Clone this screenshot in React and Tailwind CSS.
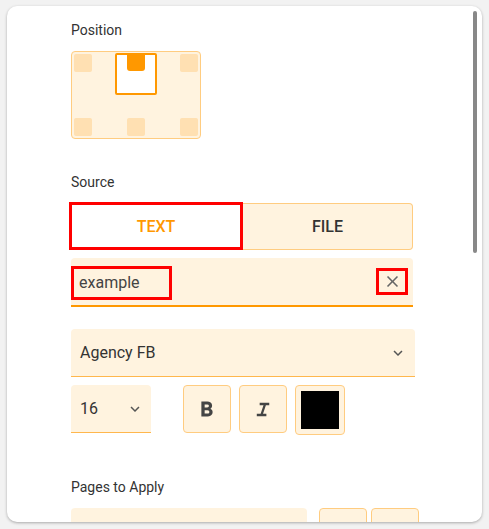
import {useState} from "react";

function Chevron({className}) {
    return (
        <svg viewBox="0 0 24 24" width="18" height="18" className={className}>
            <path fill="#555" d="M16.59 8.59 12 13.17 7.41 8.59 6 10l6 6 6-6z"/>
        </svg>
    )
}

export default function App() {
    const [source, setSource] = useState("text")

    return (
        <div className="min-h-screen bg-[#f2f2f2] pt-[6px] pl-[7px] font-['Roboto',sans-serif] text-[#333]">
            <div className="relative w-[475px] h-[516px] bg-white rounded-[10px] shadow-[0_1px_3px_rgba(0,0,0,0.3)] overflow-hidden">
                <div className="pl-[64px] pt-[14px] w-[420px]">
                    <p className="text-[14px] leading-[20px]">Position</p>

                    {/* position picker */}
                    <div className="relative mt-[11px] w-[130px] h-[88px] bg-[#fff3df] border border-[#ffcc80] rounded-[4px]">
                        <div className="absolute left-[2px] top-[2px] w-[18px] h-[18px] rounded-[2px] bg-[#ffe0b2]"></div>
                        <div className="absolute left-[108px] top-[2px] w-[18px] h-[18px] rounded-[2px] bg-[#ffe0b2]"></div>
                        <div className="absolute left-[2px] top-[66px] w-[18px] h-[18px] rounded-[2px] bg-[#ffe0b2]"></div>
                        <div className="absolute left-[55px] top-[66px] w-[18px] h-[18px] rounded-[2px] bg-[#ffe0b2]"></div>
                        <div className="absolute left-[108px] top-[66px] w-[18px] h-[18px] rounded-[2px] bg-[#ffe0b2]"></div>
                        <div className="absolute left-[43px] top-[1px] w-[42px] h-[42px] bg-white border-2 border-[#ff9800] rounded-[2px]"></div>
                        <div className="absolute left-[55px] top-[1px] w-[18px] h-[18px] rounded-b-[3px] bg-[#ff9800]"></div>
                    </div>

                    <p className="mt-[33px] text-[14px] leading-[20px]">Source</p>

                    {/* source toggle */}
                    <div className="mt-[10px] flex h-[48px] w-[344px] -ml-[2px]">
                        <button
                            onClick={() => setSource("text")}
                            className="w-[174px] h-full pt-[2px] bg-white border-[3px] border-[#ff0000] text-[16px] font-medium text-[#ff9800]"
                        >
                            TEXT
                        </button>
                        <button
                            onClick={() => setSource("file")}
                            className="flex-1 h-[47px] mt-[1px] bg-[#fff3df] border border-l-0 border-[#ffcc80] rounded-r-[4px] text-[16px] font-medium text-[#333]"
                        >
                            FILE
                        </button>
                    </div>

                    {/* text input */}
                    <div className="mt-[8px] w-[342px] h-[49px] bg-[#fff3df] border-b-2 border-[#ff9800] rounded-t-[4px] flex items-start justify-between">
                        <div className="mt-[8px] w-[101px] h-[34px] border-[3px] border-[#ff0000] flex items-center pl-[5px] text-[16px] text-[#444]">
                            {source === "text" ? "example" : "example"}
                        </div>
                        <div className="mt-[10px] mr-[5px] w-[32px] h-[27px] border-[3px] border-[#ff0000] flex items-center justify-center">
                            <svg viewBox="0 0 24 24" width="19" height="19">
                                <path fill="#666" d="M19 6.41 17.59 5 12 10.59 6.41 5 5 6.41 10.59 12 5 17.59 6.41 19 12 13.41 17.59 19 19 17.59 13.41 12z"/>
                            </svg>
                        </div>
                    </div>

                    {/* font select */}
                    <div className="mt-[22px] w-[344px] h-[48px] bg-[#fff3df] border-b border-[#ffb74d] rounded-t-[4px] flex items-center justify-between pl-[9px] pr-[8px]">
                        <span className="text-[16px] text-[#333]">Agency FB</span>
                        <Chevron/>
                    </div>

                    <div className="mt-[8px] flex items-start">
                        <div className="w-[80px] h-[48px] bg-[#fff3df] border-b border-[#ffb74d] rounded-t-[4px] flex items-center justify-between pl-[9px] pr-[7px]">
                            <span className="text-[16px] text-[#333]">16</span>
                            <Chevron/>
                        </div>
                        <button className="ml-[32px] w-[48px] h-[48px] bg-[#fff3df] border border-[#ffcc80] rounded-[4px] flex items-center justify-center">
                            <svg viewBox="0 -960 960 960" width="26" height="26">
                                <path fill="#444" d="M272-200v-560h221q65 0 120 40t55 111q0 51-23 78.5T602-491q25 11 55.5 41t30.5 90q0 89-65 124.5T501-200H272Zm121-112h104q48 0 58.5-24.5T566-372q0-11-10.5-35.5T494-432H393v120Zm0-228h93q33 0 48-17t15-38q0-24-17-39t-44-15h-95v109Z"/>
                            </svg>
                        </button>
                        <button className="ml-[8px] w-[48px] h-[48px] bg-[#fff3df] border border-[#ffcc80] rounded-[4px] flex items-center justify-center">
                            <svg viewBox="0 -960 960 960" width="23" height="23">
                                <path fill="#444" d="M200-200v-100h160l120-360H320v-100h400v100H580L460-300h140v100H200Z"/>
                            </svg>
                        </button>
                        <button className="ml-[8px] w-[50px] h-[50px] bg-[#fff3df] border-[1.5px] border-[#ffcc80] rounded-[4px] flex items-center justify-center">
                            <div className="w-[38px] h-[38px] bg-black"></div>
                        </button>
                    </div>

                    <p className="mt-[42px] text-[14px] leading-[20px]">Pages to Apply</p>

                    <div className="mt-[11px] flex items-start">
                        <div className="w-[236px] h-[48px] bg-[#fff3df] rounded-t-[4px]"></div>
                        <button className="ml-[12px] w-[48px] h-[48px] bg-[#fff3df] border border-[#ffcc80] rounded-[4px]"></button>
                        <button className="ml-[4px] w-[48px] h-[48px] bg-[#fff3df] border border-[#ffcc80] rounded-[4px]"></button>
                    </div>
                </div>

                {/* scrollbar thumb */}
                <div className="absolute right-[5px] top-[5px] w-[4px] h-[242px] rounded-full bg-[#888]"></div>
            </div>
        </div>
    )
}
